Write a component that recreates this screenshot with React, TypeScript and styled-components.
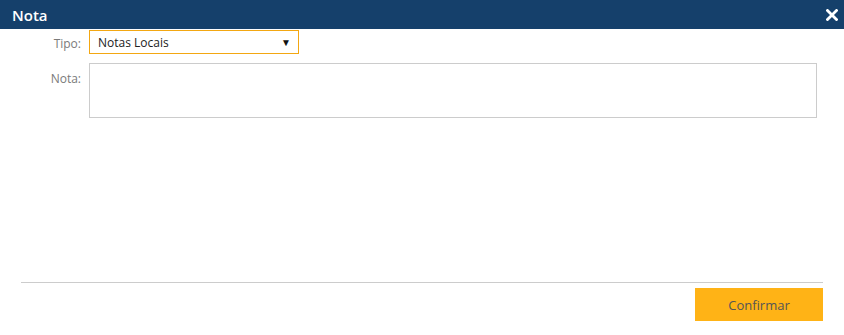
import styled, { createGlobalStyle } from "styled-components";

const GlobalStyle = createGlobalStyle`
  html, body {
    margin: 0;
    padding: 0;
    background: #ffffff;
    font-family: "Open Sans", "Noto Sans", sans-serif;
  }
`;

const Dialog = styled.div`
  width: 844px;
  height: 335px;
  display: flex;
  flex-direction: column;
  background: #ffffff;
`;

const Header = styled.div`
  height: 29px;
  background: #15406b;
  display: flex;
  align-items: center;
  justify-content: space-between;
  padding: 0 6px 0 12px;
  flex-shrink: 0;
`;

const Title = styled.div`
  color: #ffffff;
  font-size: 15px;
  font-weight: 600;
`;

const CloseButton = styled.button`
  background: none;
  border: none;
  padding: 0;
  width: 12px;
  height: 12px;
  display: flex;
  align-items: center;
  justify-content: center;
  cursor: pointer;
`;

const Body = styled.div`
  flex: 1;
  display: flex;
  flex-direction: column;
  gap: 9px;
  padding-top: 1px;
`;

const Row = styled.div`
  display: grid;
  grid-template-columns: 81px 1fr;
  column-gap: 8px;
  align-items: start;
`;

const Label = styled.label<{ offset: number }>`
  text-align: right;
  font-size: 12px;
  color: #7a7a7a;
  padding-top: ${(p) => p.offset}px;
`;

const Select = styled.div`
  width: 210px;
  height: 24px;
  box-sizing: border-box;
  border: 1px solid #f3a712;
  display: flex;
  align-items: center;
  justify-content: space-between;
  padding: 0 7px 0 8px;
  font-size: 12px;
  color: #222222;
`;

const Arrow = styled.span`
  font-size: 10px;
  color: #111111;
`;

const TextArea = styled.div`
  width: 728px;
  height: 55px;
  box-sizing: border-box;
  border: 1px solid #cccccc;
`;

const Footer = styled.div`
  margin: 0 21px 14px 21px;
  border-top: 1px solid #cccccc;
  padding-top: 5px;
  display: flex;
  justify-content: flex-end;
`;

const ConfirmButton = styled.button`
  width: 128px;
  height: 33px;
  background: #ffb316;
  border: none;
  color: #555555;
  font-family: "Open Sans", "Noto Sans", sans-serif;
  font-size: 13px;
  cursor: pointer;
`;

export default function App() {
  return (
    <>
      <GlobalStyle />
      <Dialog>
        <Header>
          <Title>Nota</Title>
          <CloseButton title="Fechar">
            <svg width="12" height="12" viewBox="0 0 12 12">
              <path
                d="M1.5 1.5 L10.5 10.5 M10.5 1.5 L1.5 10.5"
                stroke="#ffffff"
                strokeWidth="2.8"
                strokeLinecap="square"
              />
            </svg>
          </CloseButton>
        </Header>
        <Body>
          <Row>
            <Label offset={5}>Tipo:</Label>
            <Select>
              Notas Locais
              <Arrow>▼</Arrow>
            </Select>
          </Row>
          <Row>
            <Label offset={7}>Nota:</Label>
            <TextArea />
          </Row>
        </Body>
        <Footer>
          <ConfirmButton>Confirmar</ConfirmButton>
        </Footer>
      </Dialog>
    </>
  );
}
